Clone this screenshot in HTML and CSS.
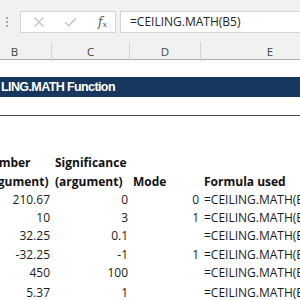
FILE: index.html
```html
<!DOCTYPE html>
<html lang="en">
<head>
    <meta charset="utf-8" />
    <title>CEILING.MATH Function</title>
    <link rel="stylesheet" href="styles.css">
</head>
<body>
    <div class="toolbar">
        <div class="grip"><span></span><span></span><span></span></div>
        <div class="fx-box">
            <svg class="icon" width="12" height="12" viewBox="0 0 12 12">
                <path d="M1.5 1.5 L10.5 10.5 M10.5 1.5 L1.5 10.5" stroke="#c4c4c4" stroke-width="1.4" fill="none" />
            </svg>
            <svg class="icon" width="13" height="10" viewBox="0 0 13 10">
                <path d="M1 5.2 L4.6 8.8 L12 1.2" stroke="#c4c4c4" stroke-width="1.4" fill="none" />
            </svg>
            <span class="fx">f<sub>x</sub></span>
        </div>
        <div class="formula">=CEILING.MATH(B5)</div>
    </div>

    <div class="sheet">
        <div class="col-heads">
            <div>B</div>
            <div>C</div>
            <div>D</div>
            <div>E</div>
        </div>

        <div class="row short"></div>
        <div class="row title"><div class="title-text">LING.MATH Function</div></div>
        <div class="row short ruled"></div>

        <div class="row"></div>
        <div class="row"></div>
        <div class="row head">
            <div class="cell">Number</div>
            <div class="cell">Significance</div>
            <div class="cell"></div>
            <div class="cell"></div>
        </div>
        <div class="row head">
            <div class="cell">(argument)</div>
            <div class="cell">(argument)</div>
            <div class="cell">Mode</div>
            <div class="cell">Formula used</div>
        </div>
        <div class="row">
            <div class="cell num">210.67</div>
            <div class="cell num">0</div>
            <div class="cell num">0</div>
            <div class="cell">=CEILING.MATH(B5)</div>
        </div>
        <div class="row">
            <div class="cell num">10</div>
            <div class="cell num">3</div>
            <div class="cell num">1</div>
            <div class="cell">=CEILING.MATH(B6,C6,D6)</div>
        </div>
        <div class="row">
            <div class="cell num">32.25</div>
            <div class="cell num">0.1</div>
            <div class="cell num"></div>
            <div class="cell">=CEILING.MATH(B7,C7)</div>
        </div>
        <div class="row">
            <div class="cell num">-32.25</div>
            <div class="cell num">-1</div>
            <div class="cell num">1</div>
            <div class="cell">=CEILING.MATH(B8,C8,D8)</div>
        </div>
        <div class="row">
            <div class="cell num">450</div>
            <div class="cell num">100</div>
            <div class="cell num"></div>
            <div class="cell">=CEILING.MATH(B9,C9)</div>
        </div>
        <div class="row last">
            <div class="cell num">5.37</div>
            <div class="cell num">1</div>
            <div class="cell num"></div>
            <div class="cell">=CEILING.MATH(B10,C10)</div>
        </div>
    </div>
</body>
</html>
```

FILE: styles.css
```css
html,
body {
    margin: 0;
    overflow: hidden;
    background: #fff;
}
body {
    width: 300px;
    height: 300px;
    font-family: "Open Sans", "Noto Sans", sans-serif;
    color: #1a1a1a;
}
.toolbar {
    height: 41px;
    background: #f1f1f1;
    display: flex;
    align-items: flex-start;
    padding-top: 11px;
    box-sizing: border-box;
}
.grip {
    width: 20px;
    display: flex;
    flex-direction: column;
    align-items: flex-start;
    gap: 2px;
    padding-top: 6px;
    padding-left: 6px;
    box-sizing: border-box;
}
.grip span {
    width: 2px;
    height: 2px;
    background: #a8a8a8;
}
.fx-box {
    width: 96px;
    height: 22px;
    box-sizing: border-box;
    background: #fff;
    border: 1px solid #d6d6d6;
    display: flex;
    align-items: center;
    padding-left: 12px;
    gap: 19px;
}
.fx {
    font-family: "DejaVu Serif", "Liberation Serif", serif;
    font-style: italic;
    font-size: 12px;
    color: #555;
    margin-left: 2px;
}
.fx sub {
    font-size: 8px;
    vertical-align: -1px;
}
.formula {
    margin-left: 4px;
    flex: 1;
    height: 22px;
    box-sizing: border-box;
    background: #fff;
    border: 1px solid #d6d6d6;
    border-right: none;
    padding-left: 9px;
    font-size: 12px;
    line-height: 20px;
    color: #262626;
    white-space: nowrap;
}
.sheet {
    margin-left: -22px;
    width: 361px;
}
.col-heads,
.row {
    display: grid;
    grid-template-columns: 74px 78px 71px 138px;
}
.col-heads {
    height: 19px;
    background: #f1f1f1;
    border-bottom: 1px solid #ababab;
    box-sizing: border-box;
    font-size: 11.5px;
    color: #444;
}
.col-heads div {
    text-align: center;
    line-height: 19px;
    margin-top: 1px;
    border-right: 1px solid #d4d4d4;
}
.col-heads div:last-child {
    border-right: none;
}
.row {
    height: 18.25px;
    font-size: 12px;
    line-height: 15px;
}
.row.short {
    height: 17px;
}
.row.ruled {
    height: 18px;
    border-bottom: 1px solid #4a4a4a;
}
.row.last {
    height: 20.25px;
    border-bottom: 2px solid #333;
}
.title {
    height: 20px;
    background: #17375e;
    display: block;
}
.title-text {
    padding-left: 23px;
    font-family: "Liberation Sans", Arial, sans-serif;
    font-weight: bold;
    font-size: 12.5px;
    letter-spacing: -0.6px;
    line-height: 20px;
    color: #fff;
}
.cell {
    display: flex;
    align-items: flex-end;
    padding: 0 2px 0.5px 3px;
    white-space: nowrap;
    min-width: 0;
}
.cell.num {
    justify-content: flex-end;
}
.head .cell {
    font-weight: bold;
    color: #111;
}
```
